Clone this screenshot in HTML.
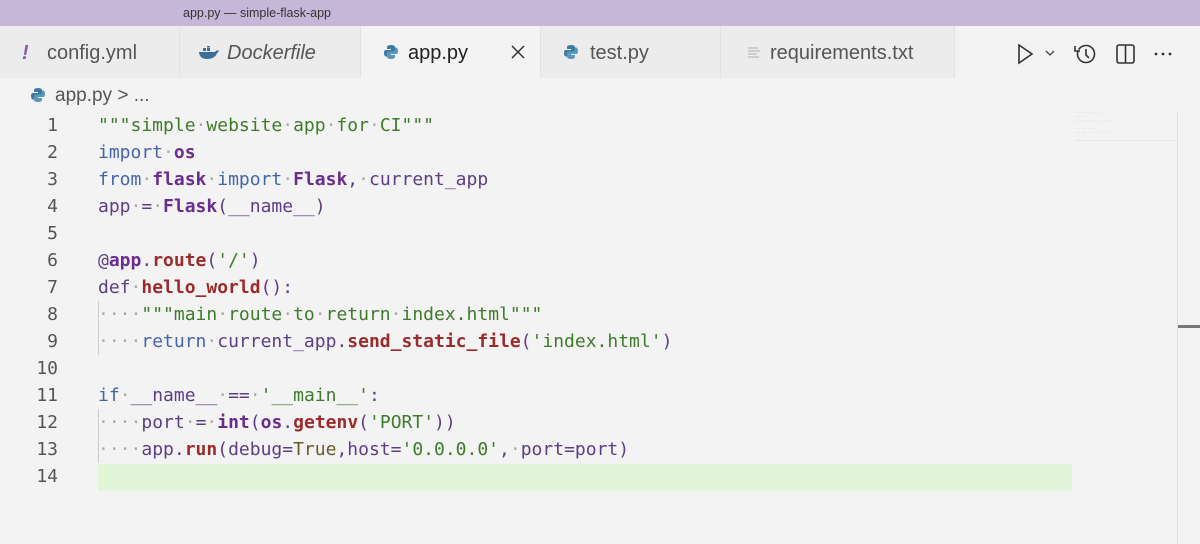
<!DOCTYPE html>
<html><head><meta charset="utf-8"><style>
body{margin:0;width:1200px;height:544px;background:#f3f3f3;overflow:hidden;font-family:"Liberation Sans",sans-serif;position:relative}
.title{position:absolute;left:0;top:0;width:1200px;height:26px;background:#c6b7d9;font-size:12.5px;color:#333}
.title span{position:absolute;left:183px;top:6px}
.tab{position:absolute;top:26px;height:52px;background:#ececec;font-size:20px;color:#555;box-sizing:border-box;border-right:1px solid #e2e2e2}
.tab .t{position:absolute;top:16px}
.active{background:#f3f3f3;color:#222}
.code{position:absolute;left:0;top:112px;font-family:"DejaVu Sans Mono","Liberation Mono",monospace;font-size:18px}
.ln{position:absolute;left:0;width:58px;text-align:right;color:#555;height:27px;line-height:27px}
.l{position:absolute;left:98px;height:27px;line-height:27px;white-space:pre;color:#5d3e85}
.s{color:#3e7b2b}.k{color:#4465a8}.b{color:#6b2c8f;font-weight:bold}.f{color:#9b2b2b;font-weight:bold}.d{color:#aaa}.p{color:#5d3e85}
.g{position:absolute;left:98px;width:1px;background:#ccc}
svg{position:absolute}
</style></head><body>
<div class="title"><span>app.py — simple-flask-app</span></div>
<div class="tab" style="left:0;width:180px"><span class="t" style="left:22px;color:#8a5aa8;font-weight:bold;font-style:italic">!</span><span class="t" style="left:47px">config.yml</span></div>
<div class="tab" style="left:180px;width:181px"><svg style="left:18px;top:20px" width="22" height="14" viewBox="0 0 22 14"><path d="M1 6h16c1-2 3-2 4-1-1 1-1 2-2 2-1 4-5 6-10 6C4 13 1 10 1 6z" fill="#3a6f9c"/><rect x="5" y="2" width="3" height="3" fill="#3a6f9c"/><rect x="9" y="2" width="3" height="3" fill="#3a6f9c"/><rect x="9" y="-1" width="3" height="2.5" fill="#3a6f9c"/></svg><span class="t" style="left:47px;font-style:italic">Dockerfile</span></div>
<div class="tab active" style="left:361px;width:180px"><svg style="left:22px;top:18px" width="16" height="16" viewBox="0 0 16 16"><path d="M8 1C4 1 4 3 4 3v2h4v1H2.5S1 6 1 9s1.5 3.5 1.5 3.5H4v-2s0-2 2-2h4s2 0 2-2V3s0-2-4-2z" fill="#3d7aa8"/><path d="M8 15c4 0 4-2 4-2v-2H8v-1h5.5S15 10 15 7s-1.5-3.5-1.5-3.5H12v2s0 2-2 2H6s-2 0-2 2V13s0 2 4 2z" fill="#5b98b8"/></svg><span class="t" style="left:47px">app.py</span><svg style="left:150px;top:19px" width="14" height="14"><path d="M1 1l12 12M13 1L1 13" stroke="#333" stroke-width="1.5"/></svg></div>
<div class="tab" style="left:541px;width:180px"><svg style="left:22px;top:18px" width="16" height="16" viewBox="0 0 16 16"><path d="M8 1C4 1 4 3 4 3v2h4v1H2.5S1 6 1 9s1.5 3.5 1.5 3.5H4v-2s0-2 2-2h4s2 0 2-2V3s0-2-4-2z" fill="#3d7aa8"/><path d="M8 15c4 0 4-2 4-2v-2H8v-1h5.5S15 10 15 7s-1.5-3.5-1.5-3.5H12v2s0 2-2 2H6s-2 0-2 2V13s0 2 4 2z" fill="#5b98b8"/></svg><span class="t" style="left:49px">test.py</span></div>
<div class="tab" style="left:721px;width:234px"><svg style="left:27px;top:21px" width="12" height="12"><path d="M0 1h10M0 4h12M0 7h9M0 10h11" stroke="#bbb" stroke-width="1.3"/></svg><span class="t" style="left:49px">requirements.txt</span></div>
<svg style="left:1015px;top:42px" width="160" height="24" viewBox="0 0 160 24">
<path d="M4 3l13 9-13 9z" fill="none" stroke="#333" stroke-width="1.6"/>
<path d="M31 9l4 4 4-4" fill="none" stroke="#444" stroke-width="1.3"/>
<circle cx="71" cy="12" r="8.5" fill="none" stroke="#333" stroke-width="1.6"/><path d="M71 7v6l3 3" fill="none" stroke="#333" stroke-width="1.6"/><path d="M60 4v5h5" fill="#f3f3f3" stroke="#333" stroke-width="1.6"/>
<rect x="102" y="3" width="17" height="18" rx="2" fill="none" stroke="#333" stroke-width="1.6"/><path d="M110.5 3v18" stroke="#333" stroke-width="1.6"/>
<circle cx="141" cy="12" r="1.4" fill="#333"/><circle cx="148" cy="12" r="1.4" fill="#333"/><circle cx="155" cy="12" r="1.4" fill="#333"/>
</svg>
<svg style="left:30px;top:87px" width="16" height="16" viewBox="0 0 16 16"><path d="M8 1C4 1 4 3 4 3v2h4v1H2.5S1 6 1 9s1.5 3.5 1.5 3.5H4v-2s0-2 2-2h4s2 0 2-2V3s0-2-4-2z" fill="#3d7aa8"/><path d="M8 15c4 0 4-2 4-2v-2H8v-1h5.5S15 10 15 7s-1.5-3.5-1.5-3.5H12v2s0 2-2 2H6s-2 0-2 2V13s0 2 4 2z" fill="#5b98b8"/></svg>
<div style="position:absolute;left:55px;top:85px;font-size:19px;color:#555">app.py &gt; ...</div>
<div style="position:absolute;left:98px;top:464px;width:974px;height:27px;background:#e3f5d8"></div>
<div style="position:absolute;left:1075px;top:110px;width:100px;height:30px;border-bottom:1px solid #ddd;opacity:.5;font:3px monospace;color:#666">......... ..... ..<br>.... ..<br>....... ...... ......<br><br>...... ....<br>....... ........ .....<br></div>
<div style="position:absolute;left:1177px;top:112px;width:1px;height:432px;background:#e0e0e0"></div>
<div style="position:absolute;left:1178px;top:325px;width:22px;height:3px;background:#777"></div>
<div class="code">
<div class="g" style="top:189px;height:54px"></div><div class="g" style="top:297px;height:54px"></div>
<div class="ln" style="top:0">1</div><div class="l" style="top:0"><span class="s">"""simple<span class="d">·</span>website<span class="d">·</span>app<span class="d">·</span>for<span class="d">·</span>CI"""</span></div>
<div class="ln" style="top:27px">2</div><div class="l" style="top:27px"><span class="k">import</span><span class="d">·</span><span class="b">os</span></div>
<div class="ln" style="top:54px">3</div><div class="l" style="top:54px"><span class="k">from</span><span class="d">·</span><span class="b">flask</span><span class="d">·</span><span class="k">import</span><span class="d">·</span><span class="b">Flask</span>,<span class="d">·</span>current_app</div>
<div class="ln" style="top:81px">4</div><div class="l" style="top:81px">app<span class="d">·</span>=<span class="d">·</span><span class="b">Flask</span>(__name__)</div>
<div class="ln" style="top:108px">5</div>
<div class="ln" style="top:135px">6</div><div class="l" style="top:135px">@<span class="b">app</span>.<span class="f">route</span>(<span class="s">'/'</span>)</div>
<div class="ln" style="top:162px">7</div><div class="l" style="top:162px"><span class="k" style="color:#5d3e85">def</span><span class="d">·</span><span class="f">hello_world</span>():</div>
<div class="ln" style="top:189px">8</div><div class="l" style="top:189px"><span class="d">····</span><span class="s">"""main<span class="d">·</span>route<span class="d">·</span>to<span class="d">·</span>return<span class="d">·</span>index.html"""</span></div>
<div class="ln" style="top:216px">9</div><div class="l" style="top:216px"><span class="d">····</span><span class="k">return</span><span class="d">·</span>current_app.<span class="f">send_static_file</span>(<span class="s">'index.html'</span>)</div>
<div class="ln" style="top:243px">10</div>
<div class="ln" style="top:270px">11</div><div class="l" style="top:270px"><span class="k">if</span><span class="d">·</span>__name__<span class="d">·</span>==<span class="d">·</span><span class="s">'__main__'</span>:</div>
<div class="ln" style="top:297px">12</div><div class="l" style="top:297px"><span class="d">····</span>port<span class="d">·</span>=<span class="d">·</span><span class="b">int</span>(<span class="b">os</span>.<span class="f">getenv</span>(<span class="s">'PORT'</span>))</div>
<div class="ln" style="top:324px">13</div><div class="l" style="top:324px"><span class="d">····</span>app.<span class="f">run</span>(debug=<span class="s" style="color:#6b5a2a">True</span>,host=<span class="s">'0.0.0.0'</span>,<span class="d">·</span>port=port)</div>
<div class="ln" style="top:351px">14</div>
</div>
</body></html>
